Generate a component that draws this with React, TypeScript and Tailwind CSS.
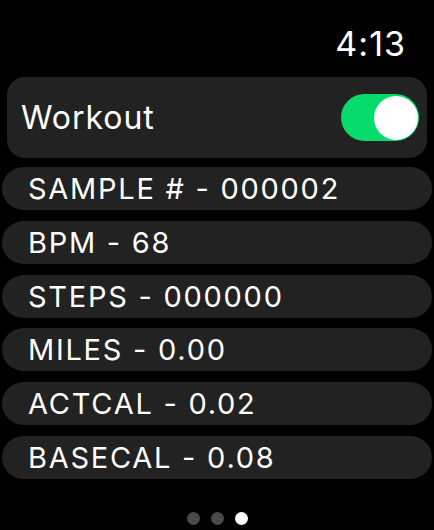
import React from 'react';

const rows = [
  'SAMPLE # - 000002',
  'BPM - 68',
  'STEPS - 000000',
  'MILES - 0.00',
  'ACTCAL - 0.02',
  'BASECAL - 0.08',
];

function Toggle() {
  return (
    <div className="w-[78px] h-[47px] rounded-full bg-[#05dc6c] flex items-center justify-end pr-[1px]">
      <div className="w-[44px] h-[44px] rounded-full bg-white" />
    </div>
  );
}

export default function App() {
  return (
    <div
      className="w-[434px] h-[530px] bg-black text-white overflow-hidden flex flex-col"
      style={{ fontFamily: 'Inter, "Open Sans", sans-serif' }}
    >
      {/* Status bar */}
      <div className="h-[77px] flex items-start justify-end pr-[28px] pt-[24px]">
        <span className="text-[34px] leading-[40px] tracking-[0.03em]">4:13</span>
      </div>

      {/* Workout switch */}
      <div className="mx-[7px] h-[81px] rounded-[18px] bg-[#222222] flex items-center justify-between pl-[14px] pr-[8px]">
        <span className="text-[32px] leading-none tracking-[0.03em]">Workout</span>
        <Toggle />
      </div>

      {/* Metrics */}
      <div className="flex flex-col gap-[10.8px] mt-[9px] mx-[2px]">
        {rows.map((r) => (
          <div
            key={r}
            className="h-[43px] rounded-full bg-[#222222] flex items-center pl-[26px]"
          >
            <span className="text-[29px] leading-none tracking-[0.06em]">{r}</span>
          </div>
        ))}
      </div>

      {/* Page dots */}
      <div className="flex justify-center gap-[11px] mt-[33px]">
        <div className="w-[13px] h-[13px] rounded-full bg-[#4a4a4a]" />
        <div className="w-[13px] h-[13px] rounded-full bg-[#4a4a4a]" />
        <div className="w-[13px] h-[13px] rounded-full bg-white" />
      </div>
    </div>
  );
}
